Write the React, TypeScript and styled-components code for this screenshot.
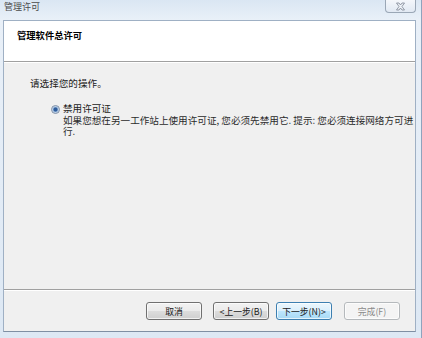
import styled, { createGlobalStyle } from "styled-components";

const GlobalStyle = createGlobalStyle`
  html, body { margin: 0; padding: 0; }
  body { font-family: "Noto Sans CJK SC", "Noto Sans", sans-serif; }
`;

const Window = styled.div`
  width: 422px;
  height: 338px;
  box-sizing: border-box;
  display: flex;
  flex-direction: column;
  background: linear-gradient(180deg, #dae6f3 0px, #e9f0f8 20px, #dde8f4 100%);
  border-right: 1px solid #8fa3bd;
  overflow: hidden;
`;

const TitleBar = styled.div`
  height: 20px;
  display: flex;
  align-items: flex-start;
  justify-content: space-between;
  padding-left: 4px;
`;

const Title = styled.span`
  font-size: 9px;
  line-height: 12px;
  color: #4a4a4a;
  margin-top: 1px;
`;

const CloseButton = styled.div`
  width: 31px;
  height: 13px;
  box-sizing: border-box;
  margin-right: 5px;
  border: 1px solid #9aa7b6;
  border-top: none;
  border-radius: 0 0 4px 4px;
  background: linear-gradient(180deg, #f4f7fb, #e1e9f3);
  display: flex;
  align-items: center;
  justify-content: center;
`;

const Frame = styled.div`
  flex: 1;
  display: flex;
  padding: 0 6px 6px 3px;
  min-height: 0;
`;

const Client = styled.div`
  flex: 1;
  display: flex;
  flex-direction: column;
  border: 1px solid #9fb0c4;
  border-bottom-color: #7f8fa3;
  background: #f0f0f0;
`;

const Header = styled.div`
  height: 41px;
  background: #ffffff;
  border-bottom: 1px solid #a0a0a0;
  box-shadow: 0 1px 0 #ffffff;
  padding: 8px 0 0 13px;
  box-sizing: border-box;
`;

const HeaderTitle = styled.div`
  font-size: 9.3px;
  line-height: 12px;
  font-weight: bold;
  color: #000;
`;

const Body = styled.div`
  flex: 1;
  padding: 16px 0 0 26px;
  font-size: 9.6px;
  line-height: 11px;
  color: #1a1a1a;
`;

const Prompt = styled.div`
  margin-bottom: 14px;
`;

const Option = styled.div`
  display: flex;
  flex-direction: column;
  padding-left: 33px;
`;

const OptionLabel = styled.label`
  display: flex;
  align-items: flex-start;
  gap: 3px;
  height: 12px;
  margin-left: -12px;
`;

const Radio = styled.span`
  width: 7px;
  height: 7px;
  margin-top: 1.5px;
  border-radius: 50%;
  border: 1px solid #7c8ea6;
  background: radial-gradient(circle, #2e5c9a 0 1.6px, #8fb0d8 2.4px, #dce6f2 3.5px);
  box-sizing: content-box;
`;

const Description = styled.div`
  width: 352px;
  color: #2a2a2a;
`;

const Footer = styled.div`
  height: 42px;
  border-top: 1px solid #a0a0a0;
  box-shadow: inset 0 1px 0 #ffffff;
  display: flex;
  justify-content: flex-end;
  align-items: flex-start;
  padding: 12px 15px 0 0;
  box-sizing: border-box;
`;

const Button = styled.div<{ $variant?: "default" | "disabled"; $gap?: number }>`
  width: 56px;
  height: 18px;
  box-sizing: border-box;
  margin-left: ${(p) => p.$gap ?? 0}px;
  border-radius: 3px;
  font-size: 8.8px;
  display: flex;
  align-items: center;
  justify-content: center;
  border: 1px solid
    ${(p) => (p.$variant === "default" ? "#3c7fb1" : p.$variant === "disabled" ? "#b5b9bc" : "#707070")};
  color: ${(p) => (p.$variant === "disabled" ? "#8a8a8a" : "#1a1a1a")};
  background: ${(p) =>
    p.$variant === "default"
      ? "linear-gradient(180deg, #ecf7fd 0%, #daeffc 50%, #bee6fd 51%, #a7d9f5 100%)"
      : p.$variant === "disabled"
      ? "#f4f4f4"
      : "linear-gradient(180deg, #f2f2f2 0%, #ebebeb 50%, #dddddd 51%, #cfcfcf 100%)"};
  box-shadow: inset 0 0 0 1px rgba(255, 255, 255, 0.7);
`;

export default function App() {
  return (
    <>
      <GlobalStyle />
      <Window>
        <TitleBar>
          <Title>管理许可</Title>
          <CloseButton>
            <svg width="11" height="9" viewBox="0 0 11 9">
              <path
                d="M1.5 1 L4 1 L5.5 3 L7 1 L9.5 1 L7 4.5 L9.5 8 L7 8 L5.5 6 L4 8 L1.5 8 L4 4.5 Z"
                fill="#eef2f7"
                stroke="#7d8794"
                strokeWidth="0.8"
              />
            </svg>
          </CloseButton>
        </TitleBar>
        <Frame>
          <Client>
            <Header>
              <HeaderTitle>管理软件总许可</HeaderTitle>
            </Header>
            <Body>
              <Prompt>请选择您的操作。</Prompt>
              <Option>
                <OptionLabel>
                  <Radio />
                  禁用许可证
                </OptionLabel>
                <Description>
                  如果您想在另一工作站上使用许可证, 您必须先禁用它. 提示: 您必须连接网络方可进行.
                </Description>
              </Option>
            </Body>
            <Footer>
              <Button>取消</Button>
              <Button $gap={11}>&lt;上一步(B)</Button>
              <Button $gap={7} $variant="default">下一步(N)&gt;</Button>
              <Button $gap={12} $variant="disabled">完成(F)</Button>
            </Footer>
          </Client>
        </Frame>
      </Window>
    </>
  );
}
